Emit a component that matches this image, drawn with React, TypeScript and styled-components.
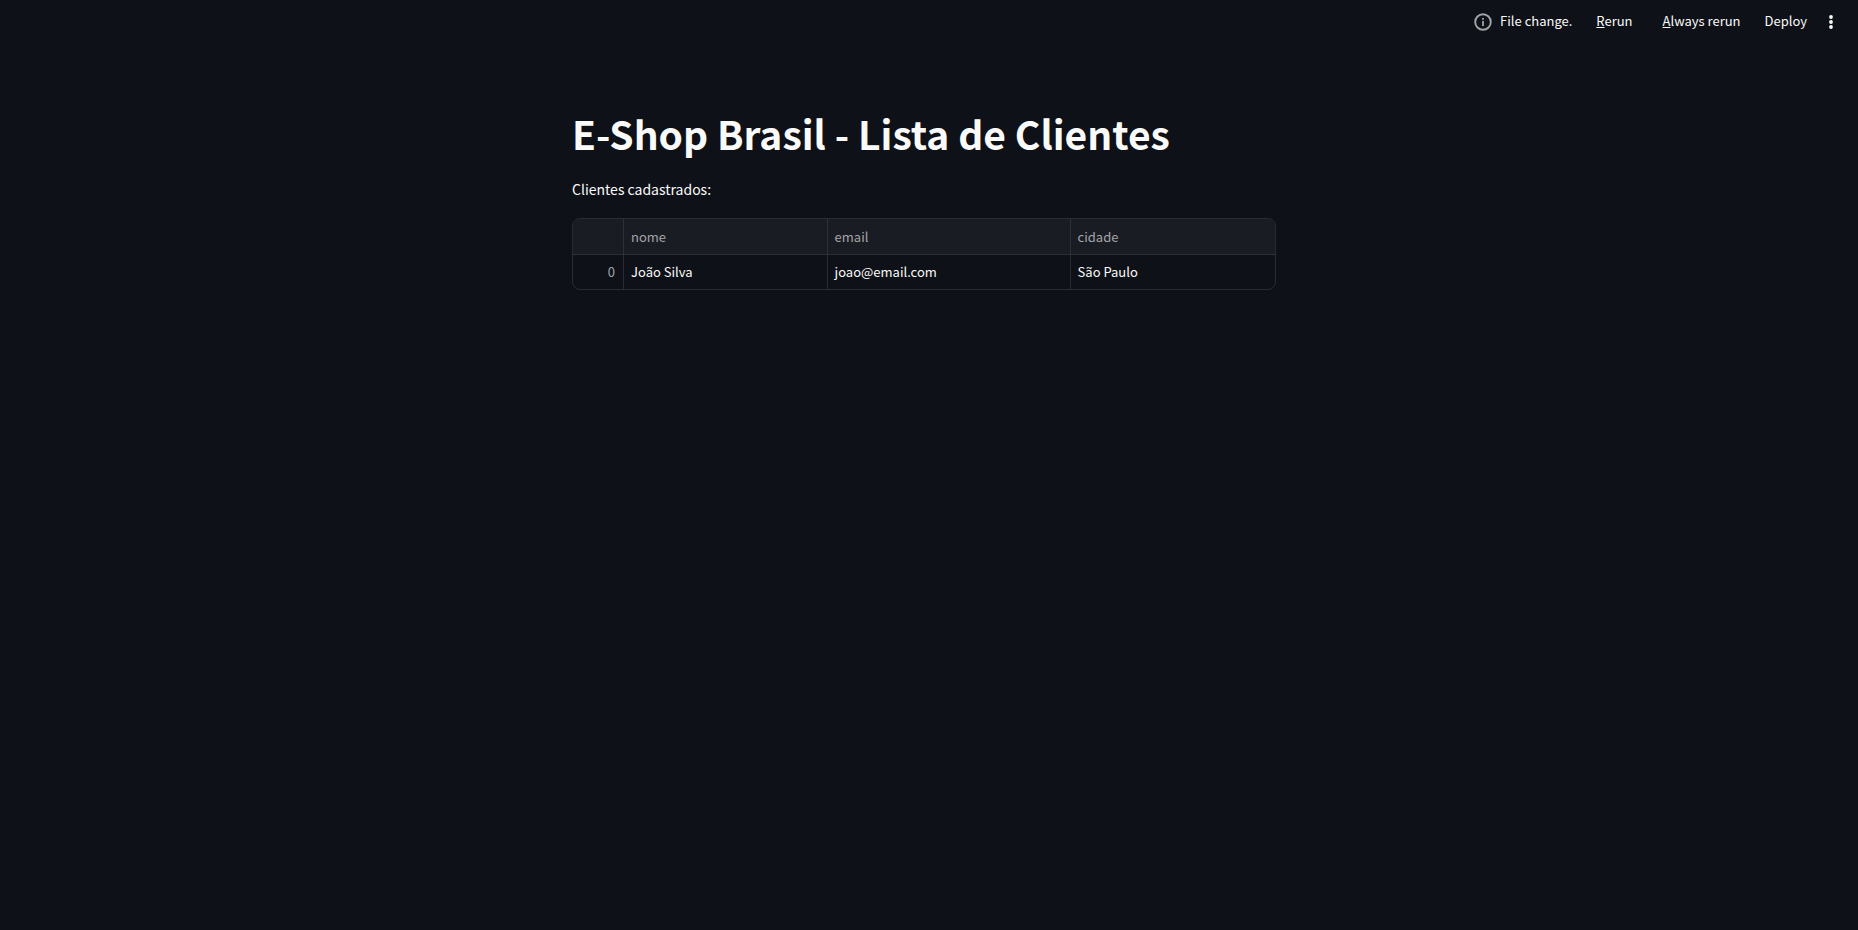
import React from "react";
import styled, { createGlobalStyle } from "styled-components";

const GlobalStyle = createGlobalStyle`
  *, *::before, *::after { box-sizing: border-box; }
  body {
    margin: 0;
    background: #0e1117;
    color: #fafafa;
    font-family: "Noto Sans CJK SC", "Open Sans", sans-serif;
    font-size: 14px;
    line-height: 24px;
  }
`;

const Page = styled.div`
  min-height: 100vh;
  background: #0e1117;
`;

const Header = styled.header`
  display: flex;
  align-items: center;
  justify-content: flex-end;
  height: 44px;
  padding-right: 15px;
  font-size: 13px;
`;

const Status = styled.div`
  display: flex;
  align-items: center;
  gap: 8px;
  margin-right: 12px;
`;

const StatusLabel = styled.span`
  padding-bottom: 2px;
`;

const InfoIcon = styled.svg`
  width: 18px;
  height: 18px;
  color: #a3a4a7;
`;

const ToolbarButton = styled.button`
  padding: 0 12px 2px;
  border: 0;
  background: none;
  color: inherit;
  font: inherit;
  line-height: 24px;
  white-space: nowrap;
  cursor: pointer;
`;

const Actions = styled.div`
  display: flex;
  gap: 6px;
`;

const MenuButton = styled.button`
  display: flex;
  padding: 2px;
  border: 0;
  background: none;
  color: inherit;
  cursor: pointer;
`;

const Main = styled.main`
  max-width: 736px;
  margin: 0 auto;
  padding: 52px 16px 160px;

  @media (min-width: 768px) {
    position: relative;
    right: 5px;
  }
`;

const Title = styled.h1`
  margin: 0;
  padding: 12px 0 19px;
  font-size: 39px;
  font-weight: 700;
  line-height: 50px;
`;

const Text = styled.p`
  margin: 0 0 17px;
`;

const Frame = styled.div`
  overflow: hidden;
  border: 1px solid #2a2c32;
  border-radius: 8px;
`;

const Table = styled.table`
  width: 100%;
  table-layout: fixed;
  border-collapse: separate;
  border-spacing: 0;
  font-size: 13px;
`;

const Col = styled.col<{ $share?: string }>`
  width: ${(p) => p.$share ?? "auto"};
`;

const HeadCell = styled.th`
  height: 36px;
  padding: 0 7px;
  background: #1a1c24;
  color: #a3a4a7;
  font-weight: 400;
  text-align: left;
  border-bottom: 1px solid #2e3035;

  & + & { border-left: 1px solid #2e3035; }
`;

const IndexCell = styled.th`
  height: 34px;
  padding: 0 8px;
  color: #a3a4a7;
  font-weight: 400;
  text-align: right;
`;

const Cell = styled.td`
  height: 34px;
  padding: 0 7px;
  border-left: 1px solid #2a2c32;
`;

const columns = ["nome", "email", "cidade"];
const rows = [["João Silva", "joao@email.com", "São Paulo"]];

export default function App() {
  return (
    <Page>
      <GlobalStyle />
      <Header>
        <Status role="status">
          <InfoIcon viewBox="0 0 18 18" fill="none" stroke="currentColor" aria-hidden="true">
            <circle cx="9" cy="9" r="7.8" strokeWidth="1.9" />
            <path d="M9 8v5M9 5v1.7" strokeWidth="1.8" />
          </InfoIcon>
          <StatusLabel>File change.</StatusLabel>
        </Status>
        <Actions>
          <ToolbarButton><u>R</u>erun</ToolbarButton>
          <ToolbarButton><u>A</u>lways rerun</ToolbarButton>
        </Actions>
        <ToolbarButton>Deploy</ToolbarButton>
        <MenuButton aria-label="Main menu">
          <svg width="20" height="20" viewBox="0 0 20 20" fill="currentColor" aria-hidden="true">
            <circle cx="10" cy="5" r="1.9" />
            <circle cx="10" cy="10" r="1.9" />
            <circle cx="10" cy="15" r="1.9" />
          </svg>
        </MenuButton>
      </Header>
      <Main>
        <Title>E-Shop Brasil - Lista de Clientes</Title>
        <Text>Clientes cadastrados:</Text>
        <Frame>
          <Table>
            <colgroup>
              <Col $share="50px" />
              <Col $share="29%" />
              <Col $share="243px" />
              <Col />
            </colgroup>
            <thead>
              <tr>
                <HeadCell aria-label="index" />
                {columns.map((name) => (
                  <HeadCell key={name} scope="col">{name}</HeadCell>
                ))}
              </tr>
            </thead>
            <tbody>
              {rows.map((row, i) => (
                <tr key={i}>
                  <IndexCell scope="row">{i}</IndexCell>
                  {row.map((value) => (
                    <Cell key={value}>{value}</Cell>
                  ))}
                </tr>
              ))}
            </tbody>
          </Table>
        </Frame>
      </Main>
    </Page>
  );
}
